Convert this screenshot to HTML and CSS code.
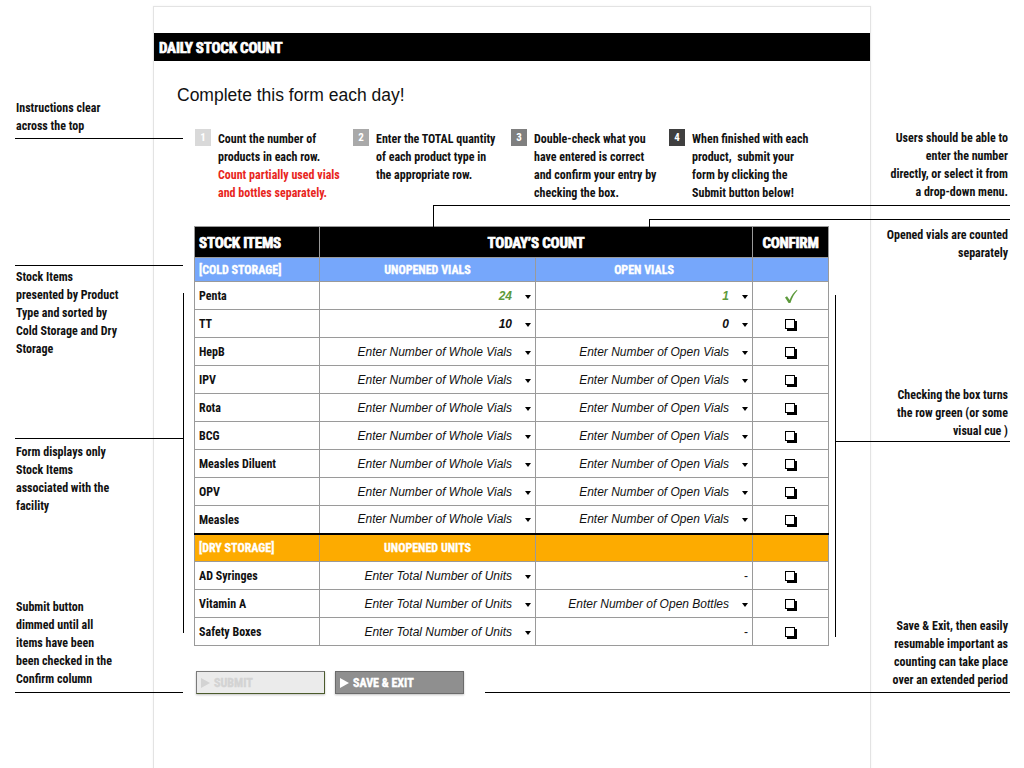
FILE: index.html
```html
<!DOCTYPE html>
<html lang="en">
<head>
<meta charset="utf-8">
<title>Daily Stock Count</title>
<link rel="stylesheet" href="styles.css">
</head>
<body>
<div class="page">
  <main class="sheet">
    <div class="bar"><h1 class="bar-title">DAILY STOCK COUNT</h1></div>
    <h2 class="lead">Complete this form each day!</h2>

    <ol class="steps">
      <li class="step"><span class="num n1">1</span><p>Count the number of<br>products in each row.<br><span class="red">Count partially used vials<br>and bottles separately.</span></p></li>
      <li class="step"><span class="num n2">2</span><p>Enter the TOTAL quantity<br>of each product type in<br>the appropriate row.</p></li>
      <li class="step"><span class="num n3">3</span><p>Double-check what you<br>have entered is correct<br>and confirm your entry by<br>checking the box.</p></li>
      <li class="step"><span class="num n4">4</span><p>When finished with each<br>product,&nbsp; submit your<br>form by clicking the<br>Submit button below!</p></li>
    </ol>

    <table class="grid">
      <colgroup><col class="c-item"><col class="c-a"><col class="c-b"><col class="c-conf"></colgroup>
      <thead>
        <tr class="head">
          <th class="left">STOCK ITEMS</th>
          <th colspan="2">TODAY’S COUNT</th>
          <th>CONFIRM</th>
        </tr>
      </thead>
      <tbody>
        <tr class="group cold">
          <td class="left">[COLD STORAGE]</td><td>UNOPENED VIALS</td><td>OPEN VIALS</td><td></td>
        </tr>
        <tr><td class="item">Penta</td><td><div class="inp"><span class="val ok">24</span><i class="arr"></i></div></td><td><div class="inp"><span class="val ok">1</span><i class="arr"></i></div></td><td class="conf"><svg class="tick" width="14" height="15" viewBox="0 0 14 15"><path d="M1 8.5 L3 7.2 L5.6 11 C7.5 6.5 9.8 3 13 0.8 L13.4 1.4 C10.5 4.2 8.2 8.5 6.4 14 L4.6 14 Z" fill="#5d9a3c"/></svg></td></tr>
        <tr><td class="item">TT</td><td><div class="inp"><span class="val">10</span><i class="arr"></i></div></td><td><div class="inp"><span class="val">0</span><i class="arr"></i></div></td><td class="conf"><span class="box"></span></td></tr>
        <tr><td class="item">HepB</td><td><div class="inp"><span class="ph">Enter Number of Whole Vials</span><i class="arr"></i></div></td><td><div class="inp"><span class="ph">Enter Number of Open Vials</span><i class="arr"></i></div></td><td class="conf"><span class="box"></span></td></tr>
        <tr><td class="item">IPV</td><td><div class="inp"><span class="ph">Enter Number of Whole Vials</span><i class="arr"></i></div></td><td><div class="inp"><span class="ph">Enter Number of Open Vials</span><i class="arr"></i></div></td><td class="conf"><span class="box"></span></td></tr>
        <tr><td class="item">Rota</td><td><div class="inp"><span class="ph">Enter Number of Whole Vials</span><i class="arr"></i></div></td><td><div class="inp"><span class="ph">Enter Number of Open Vials</span><i class="arr"></i></div></td><td class="conf"><span class="box"></span></td></tr>
        <tr><td class="item">BCG</td><td><div class="inp"><span class="ph">Enter Number of Whole Vials</span><i class="arr"></i></div></td><td><div class="inp"><span class="ph">Enter Number of Open Vials</span><i class="arr"></i></div></td><td class="conf"><span class="box"></span></td></tr>
        <tr><td class="item">Measles Diluent</td><td><div class="inp"><span class="ph">Enter Number of Whole Vials</span><i class="arr"></i></div></td><td><div class="inp"><span class="ph">Enter Number of Open Vials</span><i class="arr"></i></div></td><td class="conf"><span class="box"></span></td></tr>
        <tr><td class="item">OPV</td><td><div class="inp"><span class="ph">Enter Number of Whole Vials</span><i class="arr"></i></div></td><td><div class="inp"><span class="ph">Enter Number of Open Vials</span><i class="arr"></i></div></td><td class="conf"><span class="box"></span></td></tr>
        <tr><td class="item">Measles</td><td><div class="inp"><span class="ph">Enter Number of Whole Vials</span><i class="arr"></i></div></td><td><div class="inp"><span class="ph">Enter Number of Open Vials</span><i class="arr"></i></div></td><td class="conf"><span class="box"></span></td></tr>
        <tr class="group dry">
          <td class="left">[DRY STORAGE]</td><td>UNOPENED UNITS</td><td></td><td></td>
        </tr>
        <tr><td class="item">AD Syringes</td><td><div class="inp"><span class="ph">Enter Total Number of Units</span><i class="arr"></i></div></td><td><div class="inp dash">-</div></td><td class="conf"><span class="box"></span></td></tr>
        <tr><td class="item">Vitamin A</td><td><div class="inp"><span class="ph">Enter Total Number of Units</span><i class="arr"></i></div></td><td><div class="inp"><span class="ph">Enter Number of Open Bottles</span><i class="arr"></i></div></td><td class="conf"><span class="box"></span></td></tr>
        <tr><td class="item">Safety Boxes</td><td><div class="inp"><span class="ph">Enter Total Number of Units</span><i class="arr"></i></div></td><td><div class="inp dash">-</div></td><td class="conf"><span class="box"></span></td></tr>
      </tbody>
    </table>

    <div class="actions">
      <button class="btn btn-submit" type="button" disabled><i class="play"></i>SUBMIT</button>
      <button class="btn btn-save" type="button"><i class="play"></i>SAVE &amp; EXIT</button>
    </div>
  </main>

  <div class="notes">
    <p class="note left n-instr">Instructions clear<br>across the top</p>
    <p class="note left n-items">Stock Items<br>presented by Product<br>Type and sorted by<br>Cold Storage and Dry<br>Storage</p>
    <p class="note left n-form">Form displays only<br>Stock Items<br>associated with the<br>facility</p>
    <p class="note left n-submit">Submit button<br>dimmed until all<br>items have been<br>been checked in the<br>Confirm column</p>

    <p class="note right n-users">Users should be able to<br>enter the number<br>directly, or select it from<br>a drop-down menu.</p>
    <p class="note right n-open">Opened vials are counted<br>separately</p>
    <p class="note right n-check">Checking the box turns<br>the row green (or some<br>visual cue )</p>
    <p class="note right n-save">Save &amp; Exit, then easily<br>resumable important as<br>counting can take place<br>over an extended period</p>

    <span class="ln h l1"></span>
    <span class="ln h l2"></span>
    <span class="ln v l-vert"></span>
    <span class="ln h l3"></span>
    <span class="ln h l4"></span>
    <span class="ln v r1v"></span>
    <span class="ln h r1h"></span>
    <span class="ln v r2v"></span>
    <span class="ln h r2h"></span>
    <span class="ln v r-vert"></span>
    <span class="ln h r3"></span>
    <span class="ln h r4"></span>
  </div>
</div>
</body>
</html>
```

FILE: styles.css
```css
* { box-sizing: border-box; }

html, body {
  margin: 0;
  padding: 0;
  background: #ffffff;
}

body {
  font-family: "Roboto Condensed", "DejaVu Sans Condensed", "Liberation Sans", sans-serif;
  color: #111;
  overflow: hidden;
  height: 768px;
}

.page {
  position: relative;
  width: 1024px;
  height: 768px;
  padding-top: 6px;
}

/* ---------- sheet ---------- */
.sheet {
  width: 718px;
  margin: 0 auto;
  min-height: 800px;
  border: 1px solid #e3e3e3;
  box-shadow: 0 0 2px rgba(0, 0, 0, 0.06);
  background: #fff;
  padding-top: 26px;
}

.bar {
  background: #000;
  height: 28px;
  display: flex;
  align-items: center;
  padding: 1px 0 0 5px;
}

.bar-title {
  margin: 0;
  color: #fff;
  font-size: 15px;
  font-weight: 700;
  letter-spacing: -0.2px;
  -webkit-text-stroke: 0.7px #fff;
}

.lead {
  margin: 23px 0 0 23px;
  font-family: "Liberation Sans", Arial, sans-serif;
  font-weight: 400;
  font-size: 17.5px;
  line-height: 22px;
  color: #111;
}

/* ---------- steps ---------- */
.steps {
  list-style: none;
  margin: 22px 0 0 41px;
  padding: 0;
  display: flex;
}

.step {
  width: 158px;
  display: flex;
  gap: 7px;
}

.num {
  flex: none;
  width: 16px;
  height: 17px;
  margin-top: 1px;
  display: flex;
  align-items: center;
  justify-content: center;
  color: #fff;
  font-size: 11px;
  font-weight: 700;
}
.n1 { background: #d9d9d9; }
.n2 { background: #a9a9a9; }
.n3 { background: #7f7f7f; }
.n4 { background: #3f3f3f; }

.step p {
  margin: 0;
  padding-top: 2px;
  font-size: 12px;
  font-weight: 700;
  line-height: 18px;
  white-space: nowrap;
  color: #111;
}

.red { color: #e8261d; }

/* ---------- table ---------- */
.grid {
  margin: 24px 0 0 40px;
  border-collapse: collapse;
  table-layout: fixed;
  width: 634px;
}

.c-item { width: 125px; }
.c-a { width: 216px; }
.c-b { width: 217px; }
.c-conf { width: 76px; }

.grid th,
.grid td {
  border: 1px solid #9a9a9a;
  padding: 0;
}

.head th {
  background: #000;
  height: 31px;
  padding-top: 2px;
  color: #fff;
  font-size: 15px;
  font-weight: 700;
  letter-spacing: -0.2px;
  -webkit-text-stroke: 0.7px #fff;
  text-align: center;
}

.grid .left {
  text-align: left;
  padding-left: 4px;
}

.group td {
  height: 24px;
  padding-top: 1px;
  color: #fff;
  font-size: 12px;
  font-weight: 700;
  text-align: center;
  -webkit-text-stroke: 0.3px #fff;
}
.group .left { padding-left: 4px; }
.cold td { background: #76a7fb; }
.dry td {
  background: #fdab00;
  height: 28px;
  border-top: 2px solid #000;
}

.grid tbody tr td {
  height: 28px;
}
.grid tbody tr.group.cold td { height: 24px; }

.item {
  font-size: 12px;
  font-weight: 700;
  padding-left: 4px !important;
  padding-top: 1px !important;
}

.inp {
  display: flex;
  align-items: center;
  justify-content: flex-end;
  gap: 13px;
  padding-right: 4px;
  font-family: "Liberation Sans", Arial, sans-serif;
  font-style: italic;
  font-size: 12px;
}

.inp.dash {
  font-style: normal;
  padding-right: 4px;
}

.ph { color: #111; }

.val {
  font-weight: 700;
  color: #111;
}
.val.ok {
  color: #5d9a3c;
  font-weight: 700;
}

.arr {
  width: 0;
  height: 0;
  border-left: 3.5px solid transparent;
  border-right: 3.5px solid transparent;
  border-top: 4px solid #000;
  margin-top: 2px;
}

.conf {
  text-align: center;
  vertical-align: middle;
}

.box {
  display: inline-block;
  width: 10px;
  height: 10px;
  border: 1px solid #000;
  box-shadow: 2px 2px 0 #000;
  vertical-align: middle;
  margin: 0 2px 2px 0;
}

.tick {
  display: inline-block;
  vertical-align: middle;
}

/* ---------- actions ---------- */
.actions {
  margin: 25px 0 0 42px;
  display: flex;
  gap: 10px;
}

.btn {
  width: 129px;
  height: 23px;
  display: flex;
  align-items: center;
  gap: 4px;
  padding: 0 0 0 4px;
  font-family: inherit;
  font-size: 12px;
  font-weight: 700;
  box-shadow: 0 1px 2px rgba(0, 0, 0, 0.25);
  cursor: default;
}

.btn-submit {
  background: #ebebeb;
  border: 1px solid #7a7a7a;
  border-right-color: #4b5b2b;
  border-bottom-color: #4b5b2b;
  color: #d3d3d3;
  -webkit-text-stroke: 0.4px #d3d3d3;
}

.btn-save {
  background: #8f8f8f;
  border: 1px solid #6b6b6b;
  color: #fff;
  -webkit-text-stroke: 0.4px #fff;
}

.play {
  width: 0;
  height: 0;
  border-top: 5.5px solid transparent;
  border-bottom: 5.5px solid transparent;
  border-left: 9px solid currentColor;
}

/* ---------- annotations (overlay callouts) ---------- */
.note {
  position: absolute;
  margin: 0;
  font-size: 12px;
  font-weight: 700;
  line-height: 18px;
  color: #111;
  white-space: nowrap;
}
.note.left { left: 16px; }
.note.right { right: 16px; text-align: right; }

.n-instr { top: 99px; }
.n-items { top: 268px; }
.n-form { top: 443px; }
.n-submit { top: 598px; }
.n-users { top: 129px; }
.n-open { top: 226px; }
.n-check { top: 386px; }
.n-save { top: 617px; }

.ln {
  position: absolute;
  background: #000;
}
.ln.h { height: 1px; }
.ln.v { width: 1px; }

.l1 { top: 138px; left: 15px; width: 168px; }
.l2 { top: 265px; left: 15px; width: 168px; }
.l3 { top: 438px; left: 15px; width: 168px; }
.l4 { top: 692px; left: 15px; width: 168px; }
.l-vert { left: 183px; top: 293px; height: 340px; }

.r1v { left: 433px; top: 205px; height: 22px; }
.r1h { left: 433px; top: 205px; width: 577px; }
.r2v { left: 649px; top: 219px; height: 8px; }
.r2h { left: 649px; top: 219px; width: 361px; }
.r-vert { left: 835px; top: 295px; height: 342px; }
.r3 { left: 835px; top: 441px; width: 175px; }
.r4 { left: 485px; top: 692px; width: 525px; }
```
